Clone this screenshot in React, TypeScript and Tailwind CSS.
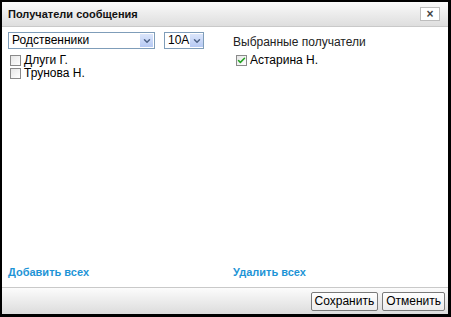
import { Check, ChevronDown } from "lucide-react";

function Select({ label, width }: { label: string; width: string }) {
  return (
    <div className={`flex h-[17px] items-stretch border border-[#7f9db9] bg-white ${width}`}>
      <span className="flex-1 whitespace-nowrap pl-[3px] text-[12px] leading-[15px] text-black">{label}</span>
      <span className="m-[1px] flex w-[13px] shrink-0 items-center justify-center bg-gradient-to-b from-[#dce6fb] to-[#b6c9f3]">
        <ChevronDown className="h-[10px] w-[10px] text-[#4d6185]" strokeWidth={3.5} />
      </span>
    </div>
  );
}

function CheckItem({ label, checked }: { label: string; checked?: boolean }) {
  return (
    <div className="flex h-[12px] items-center gap-[3px]">
      <span className="flex h-[11px] w-[11px] shrink-0 items-center justify-center border border-[#8a8a8a] bg-gradient-to-br from-[#e6e6e6] to-white">
        {checked && <Check className="h-[9px] w-[9px] text-[#21a121]" strokeWidth={4} />}
      </span>
      <span className="text-[12px] leading-[12px] text-black">{label}</span>
    </div>
  );
}

export default function App() {
  return (
    <div className="h-[317px] w-[451px] bg-black pb-[3px] pl-[2px] pr-[3px] pt-[2px] font-['Liberation_Sans',Arial,sans-serif]">
      <div className="flex h-full flex-col bg-white">
        {/* title */}
        <div className="flex h-[25px] items-center justify-between border-b border-[#c9c9c9] bg-gradient-to-b from-[#fafafa] to-[#dedede] pl-[6px] pr-[8px]">
          <span className="text-[11px] font-bold text-[#111]">Получатели сообщения</span>
          <button className="flex h-[14px] w-[20px] items-center justify-center border border-[#bdbdbd] bg-white text-[12px] font-bold leading-none text-[#444]">
            ×
          </button>
        </div>

        {/* body */}
        <div className="flex flex-1 flex-col px-[6px] pb-[7px] pt-[5px]">
          <div className="flex flex-1">
            <div className="flex w-[225px] flex-col">
              <div className="flex gap-[9px]">
                <Select label="Родственники" width="w-[147px]" />
                <Select label="10А" width="w-[40px]" />
              </div>
              <div className="mt-[5px] flex flex-col gap-[1px] pl-[2px]">
                <CheckItem label="Длуги Г." />
                <CheckItem label="Трунова Н." />
              </div>
            </div>
            <div className="flex flex-col">
              <div className="flex h-[17px] items-center pt-[3px] text-[12px] text-[#222]">Выбранные получатели</div>
              <div className="mt-[5px] flex flex-col pl-[3px]">
                <CheckItem label="Астарина Н." checked />
              </div>
            </div>
          </div>
          <div className="flex text-[11px] font-bold text-[#1e94d6]">
            <span className="w-[225px]">Добавить всех</span>
            <span>Удалить всех</span>
          </div>
        </div>

        {/* footer */}
        <div className="flex h-[27px] items-center justify-end gap-[4px] border-t border-[#c9c9c9] bg-gradient-to-b from-[#fcfcfc] to-[#dcdcdc] pr-[3px]">
          <button className="h-[19px] rounded-[2px] border border-[#7a7a7a] bg-gradient-to-b from-white to-[#ececec] px-[3px] text-[12px] leading-none text-black">
            Сохранить
          </button>
          <button className="h-[19px] rounded-[2px] border border-[#7a7a7a] bg-gradient-to-b from-white to-[#ececec] px-[3px] text-[12px] leading-none text-black">
            Отменить
          </button>
        </div>
      </div>
    </div>
  );
}
